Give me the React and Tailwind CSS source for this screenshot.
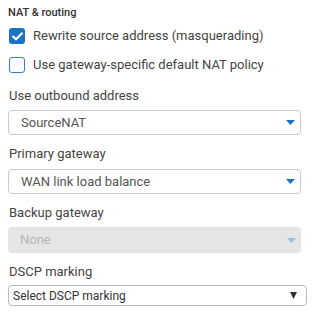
export default function App() {
  const font = { fontFamily: "Roboto, 'Noto Sans', sans-serif" };
  const Caret = ({ color }) => (
    <svg width="9" height="5" viewBox="0 0 9 5" className="shrink-0">
      <path d="M0 0 L9 0 L4.5 5 Z" fill={color} />
    </svg>
  );
  return (
    <div className="w-[335px] h-[321px] bg-white text-[#333]" style={font}>
      <div className="pl-2 pt-[6px] w-[301px]">
        <div className="text-[11px] font-medium leading-[13px] text-[#333]">NAT &amp; routing</div>
        <div className="flex items-center mt-[9px] h-[16px] ml-px">
          <span className="w-[16px] h-[16px] rounded-[3px] bg-[#1a73c9] flex items-center justify-center">
            <svg width="11" height="9" viewBox="0 0 11 9">
              <path d="M1.2 4.6 L4 7.3 L9.8 1.4" stroke="white" strokeWidth="2.2" fill="none" strokeLinecap="round" strokeLinejoin="round" />
            </svg>
          </span>
          <span className="ml-2 text-[13px] text-[#444]">Rewrite source address (masquerading)</span>
        </div>
        <div className="flex items-center mt-[13px] h-[16px] ml-px">
          <span className="w-[16px] h-[16px] rounded-[3px] border border-[#3a7cc4] bg-white" />
          <span className="ml-2 text-[13px] text-[#444]">Use gateway-specific default NAT policy</span>
        </div>

        <div className="mt-[15px] text-[13px] leading-[16px] text-[#444] ml-px">Use outbound address</div>
        <div className="mt-[6px] h-[25px] rounded-[4px] border border-[#c8cacc] flex items-center justify-between pl-3 pr-[5px]">
          <span className="text-[13px] text-[#555]">SourceNAT</span>
          <Caret color="#1a73c9" />
        </div>

        <div className="mt-[11px] text-[13px] leading-[16px] text-[#444] ml-px">Primary gateway</div>
        <div className="mt-[7px] h-[25px] rounded-[4px] border border-[#c8cacc] flex items-center justify-between pl-3 pr-[5px]">
          <span className="text-[13px] text-[#555]">WAN link load balance</span>
          <Caret color="#1a73c9" />
        </div>

        <div className="mt-[11px] text-[13px] leading-[16px] text-[#444] ml-px">Backup gateway</div>
        <div className="mt-[6px] h-[26px] rounded-[4px] bg-[#e5e5e5] flex items-center justify-between pl-3 pr-[5px]">
          <span className="text-[13px] text-[#b5b5b5]">None</span>
          <Caret color="#8fc0e8" />
        </div>

        <div className="mt-[11px] text-[13px] leading-[16px] text-[#444] ml-px">DSCP marking</div>
        <div className="mt-[5px] w-[299px] h-[21px] rounded-[4px] border border-[#b8babc] flex items-center justify-between pl-1 pr-[9px]">
          <span className="text-[12px] text-[#333]">Select DSCP marking</span>
          <svg width="7" height="7" viewBox="0 0 7 7"><path d="M0 0 L7 0 L3.5 7 Z" fill="#333" /></svg>
        </div>
      </div>
    </div>
  );
}
